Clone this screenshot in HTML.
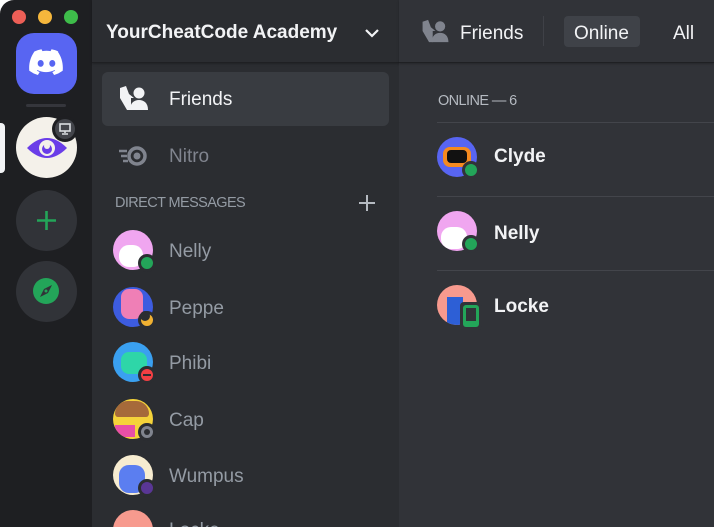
<!DOCTYPE html>
<html><head><meta charset="utf-8"><style>
*{margin:0;padding:0;box-sizing:border-box}
body{width:714px;height:527px;overflow:hidden;background:#fff;font-family:"Liberation Sans",sans-serif;position:relative}
.win{position:absolute;left:0;top:0;width:714px;height:527px;border-top-left-radius:14px;overflow:hidden;background:#1e1f22}
.abs{position:absolute}
.side{left:92px;top:0;width:307px;height:527px;background:#2b2d31}
.main{left:399px;top:0;width:315px;height:527px;background:#313338}
.hdr{border-bottom:1px solid #1f2023;box-shadow:0 1px 2px rgba(0,0,0,.25)}
.av{position:absolute;width:40px;height:40px;border-radius:50%;overflow:hidden}
.st{position:absolute;width:18px;height:18px;border-radius:50%;border:3px solid #2b2d31}
.nm{position:absolute;color:#949ba4;font-size:19px}
.mn{position:absolute;color:#f2f3f5;font-size:19px;font-weight:bold}
.div{position:absolute;left:437px;width:277px;height:1px;background:#43454b}
</style></head><body><div class="win">
<!-- rail -->
<div class="abs" style="left:12px;top:10px;width:14px;height:14px;border-radius:50%;background:#ed5f57"></div>
<div class="abs" style="left:38px;top:10px;width:14px;height:14px;border-radius:50%;background:#f6b73c"></div>
<div class="abs" style="left:64px;top:10px;width:14px;height:14px;border-radius:50%;background:#3ebc4a"></div>
<div class="abs" style="left:16px;top:33px;width:61px;height:61px;border-radius:18px;background:#5865f2"></div>
<svg class="abs" style="left:29px;top:48px" width="35" height="30" viewBox="0 0 35 30"><path fill="#fff" d="M29.6 3.5A28 28 0 0 0 22.5 1.3l-.9 1.8a26 26 0 0 0-8.2 0l-.9-1.8A28 28 0 0 0 5.4 3.5C1 10 -.3 16.4.3 22.7a28 28 0 0 0 8.6 4.3l1.8-3a18 18 0 0 1-2.9-1.4l.7-.5a20 20 0 0 0 17 0l.7.5a18 18 0 0 1-2.9 1.4l1.8 3a28 28 0 0 0 8.6-4.3c.7-7.3-1.2-13.600-5-19.2zM11.7 18.8c-1.7 0-3-1.5-3-3.4s1.3-3.4 3-3.4 3 1.5 3 3.4-1.3 3.4-3 3.4zm11.6 0c-1.7 0-3-1.5-3-3.4s1.3-3.4 3-3.4 3 1.5 3 3.4-1.3 3.4-3 3.4z"/></svg>
<div class="abs" style="left:26px;top:104px;width:40px;height:3px;border-radius:2px;background:#35363c"></div>
<div class="abs" style="left:0;top:123px;width:5px;height:50px;border-radius:0 4px 4px 0;background:#f2f3f5"></div>
<div class="abs" style="left:16px;top:117px;width:61px;height:61px;border-radius:50%;background:#f4f1ea"></div>
<svg class="abs" style="left:26px;top:134px" width="42" height="28" viewBox="0 0 42 28"><path fill="#6a3de8" d="M1 14Q21 -6 41 14Q21 34 1 14z"/><circle cx="21" cy="14" r="8" fill="#f4f1ea"/><circle cx="21" cy="15" r="5" fill="#6a3de8"/><circle cx="21" cy="12" r="3" fill="#f4f1ea"/></svg>
<div class="abs" style="left:52px;top:116px;width:26px;height:26px;border-radius:50%;background:#1e1f22"></div>
<div class="abs" style="left:55px;top:119px;width:20px;height:20px;border-radius:50%;background:#43454b"></div>
<svg class="abs" style="left:59px;top:123px" width="12" height="12" viewBox="0 0 12 12"><rect x="1" y="1" width="10" height="7" fill="none" stroke="#dbdee1" stroke-width="1.6"/><path d="M6 8v2M3 11h6" stroke="#dbdee1" stroke-width="1.6"/></svg>
<div class="abs" style="left:16px;top:190px;width:61px;height:61px;border-radius:50%;background:#313338"></div>
<svg class="abs" style="left:35px;top:209px" width="23" height="23"><path d="M11.5 2v19M2 11.5h19" stroke="#23a559" stroke-width="2.6"/></svg>
<div class="abs" style="left:16px;top:261px;width:61px;height:61px;border-radius:50%;background:#313338"></div>
<div class="abs" style="left:33px;top:278px;width:26px;height:26px;border-radius:50%;background:#23a559"></div>
<svg class="abs" style="left:33px;top:278px" width="26" height="26"><path d="M19 7l-4 8-8 4 4-8z" fill="#313338"/><circle cx="13" cy="13" r="1.5" fill="#23a559"/></svg>
<!-- sidebar -->
<div class="abs side"></div>
<div class="abs hdr" style="left:92px;top:0;width:307px;height:63px;background:#2b2d31"></div>
<div class="abs" style="left:106px;top:22px;color:#f2f3f5;font-size:19px;font-weight:bold">YourCheatCode Academy</div>
<svg class="abs" style="left:364px;top:27px" width="16" height="12"><path d="M2 3l6 6 6-6" fill="none" stroke="#f2f3f5" stroke-width="2.2"/></svg>
<div class="abs" style="left:102px;top:72px;width:287px;height:54px;border-radius:6px;background:#393c41"></div>
<svg class="abs" style="left:119px;top:85px" width="30" height="26" viewBox="0 0 30 26"><path fill="#f2f3f5" d="M1 3l6-2 3 8 5 4h-3v12H8L1 13z"/><circle cx="20" cy="8" r="5.5" fill="#f2f3f5"/><path fill="#f2f3f5" d="M11 25c0-7 4-10 9-10s9 3 9 10z"/></svg>
<div class="abs" style="left:169px;top:89px;color:#f2f3f5;font-size:19px">Friends</div>
<svg class="abs" style="left:118px;top:145px" width="30" height="22" viewBox="0 0 30 22"><path d="M1 6h8M3 11h6M5 16h5" stroke="#80848e" stroke-width="2.4"/><circle cx="19" cy="11" r="8" fill="none" stroke="#80848e" stroke-width="3.5"/><circle cx="19" cy="11" r="3.5" fill="#80848e"/></svg>
<div class="abs" style="left:169px;top:146px;color:#80848e;font-size:19px">Nitro</div>
<div class="abs" style="left:115px;top:195px;color:#949ba4;font-size:14.5px;letter-spacing:-.6px">DIRECT MESSAGES</div>
<svg class="abs" style="left:359px;top:195px" width="16" height="16"><path d="M8 0v16M0 8h16" stroke="#b5bac1" stroke-width="2"/></svg>

<div class="av" style="left:113px;top:230px;background:#f0a6f0"><div class="abs" style="left:6px;top:15px;width:24px;height:22px;border-radius:10px;background:#fff"></div></div>
<div class="st" style="left:138px;top:254px;background:#23a559"></div>
<div class="nm" style="left:169px;top:241px">Nelly</div>

<div class="av" style="left:113px;top:287px;background:#3d5ce0"><div class="abs" style="left:8px;top:2px;width:22px;height:30px;border-radius:8px;background:#ef7fb6"></div></div>
<div class="st" style="left:138px;top:311px;background:#f0b132"><div class="abs" style="left:-1px;top:-3px;width:10px;height:10px;border-radius:50%;background:#2b2d31"></div></div>
<div class="nm" style="left:169px;top:298px">Peppe</div>

<div class="av" style="left:113px;top:342px;background:#3aa0f0"><div class="abs" style="left:8px;top:10px;width:26px;height:22px;border-radius:8px;background:#2ed6a8"></div></div>
<div class="st" style="left:138px;top:366px;background:#f23f43"><div class="abs" style="left:2px;top:5px;width:8px;height:2px;background:#2b2d31"></div></div>
<div class="nm" style="left:169px;top:353px">Phibi</div>

<div class="av" style="left:113px;top:399px;background:#f5d33a"><div class="abs" style="left:2px;top:2px;width:34px;height:16px;border-radius:16px 16px 4px 4px;background:#a66a3a"></div><div class="abs" style="left:2px;top:26px;width:20px;height:12px;background:#e84fa6"></div></div>
<div class="st" style="left:138px;top:423px;background:#80848e"><div class="abs" style="left:3px;top:3px;width:6px;height:6px;border-radius:50%;background:#2b2d31"></div></div>
<div class="nm" style="left:169px;top:410px">Cap</div>

<div class="av" style="left:113px;top:455px;background:#f7ecd0"><div class="abs" style="left:6px;top:10px;width:26px;height:28px;border-radius:10px;background:#5b7ef0"></div></div>
<div class="st" style="left:138px;top:479px;background:#593695"></div>
<div class="nm" style="left:169px;top:466px">Wumpus</div>

<div class="av" style="left:113px;top:510px;background:#f79a8e"></div>
<div class="nm" style="left:169px;top:520px">Locke</div>

<!-- main -->
<div class="abs main"></div>
<div class="abs hdr" style="left:399px;top:0;width:315px;height:63px;background:#313338"></div>
<svg class="abs" style="left:421px;top:19px" width="29" height="24" viewBox="0 0 30 26"><path fill="#80848e" d="M1 3l6-2 3 8 5 4h-3v12H8L1 13z"/><circle cx="20" cy="8" r="5.5" fill="#80848e"/><path fill="#80848e" d="M11 25c0-7 4-10 9-10s9 3 9 10z"/></svg>
<div class="abs" style="left:460px;top:23px;color:#f2f3f5;font-size:19px">Friends</div>
<div class="abs" style="left:543px;top:16px;width:1px;height:30px;background:#3f4147"></div>
<div class="abs" style="left:564px;top:16px;width:76px;height:31px;border-radius:4px;background:#3f4248"></div>
<div class="abs" style="left:574px;top:23px;color:#f2f3f5;font-size:19px">Online</div>
<div class="abs" style="left:673px;top:23px;color:#f2f3f5;font-size:19px">All</div>
<div class="abs" style="left:438px;top:93px;color:#b5bac1;font-size:14.5px;letter-spacing:-.6px">ONLINE — 6</div>
<div class="div" style="top:122px"></div>
<div class="div" style="top:196px"></div>
<div class="div" style="top:270px"></div>

<div class="av" style="left:437px;top:137px;background:#5865f2"><div class="abs" style="left:6px;top:10px;width:28px;height:20px;border-radius:7px;background:#f58a1f"></div><div class="abs" style="left:10px;top:13px;width:20px;height:13px;border-radius:4px;background:#111"></div></div>
<div class="st" style="left:462px;top:161px;background:#23a559;border-color:#313338"></div>
<div class="mn" style="left:494px;top:146px">Clyde</div>

<div class="av" style="left:437px;top:211px;background:#f0a6f0"><div class="abs" style="left:4px;top:16px;width:26px;height:22px;border-radius:10px;background:#fff"></div></div>
<div class="st" style="left:462px;top:235px;background:#23a559;border-color:#313338"></div>
<div class="mn" style="left:494px;top:223px">Nelly</div>

<div class="av" style="left:437px;top:285px;background:#f79a8e"><div class="abs" style="left:10px;top:12px;width:16px;height:28px;background:#2d5fd6"></div></div>
<div class="abs" style="left:460px;top:302px;width:22px;height:28px;border-radius:4px;background:#313338"></div>
<div class="abs" style="left:463px;top:305px;width:16px;height:22px;border-radius:3px;background:#23a559"></div>
<div class="abs" style="left:466px;top:308px;width:10px;height:13px;background:#313338"></div>
<div class="mn" style="left:494px;top:296px">Locke</div>
</div></body></html>
